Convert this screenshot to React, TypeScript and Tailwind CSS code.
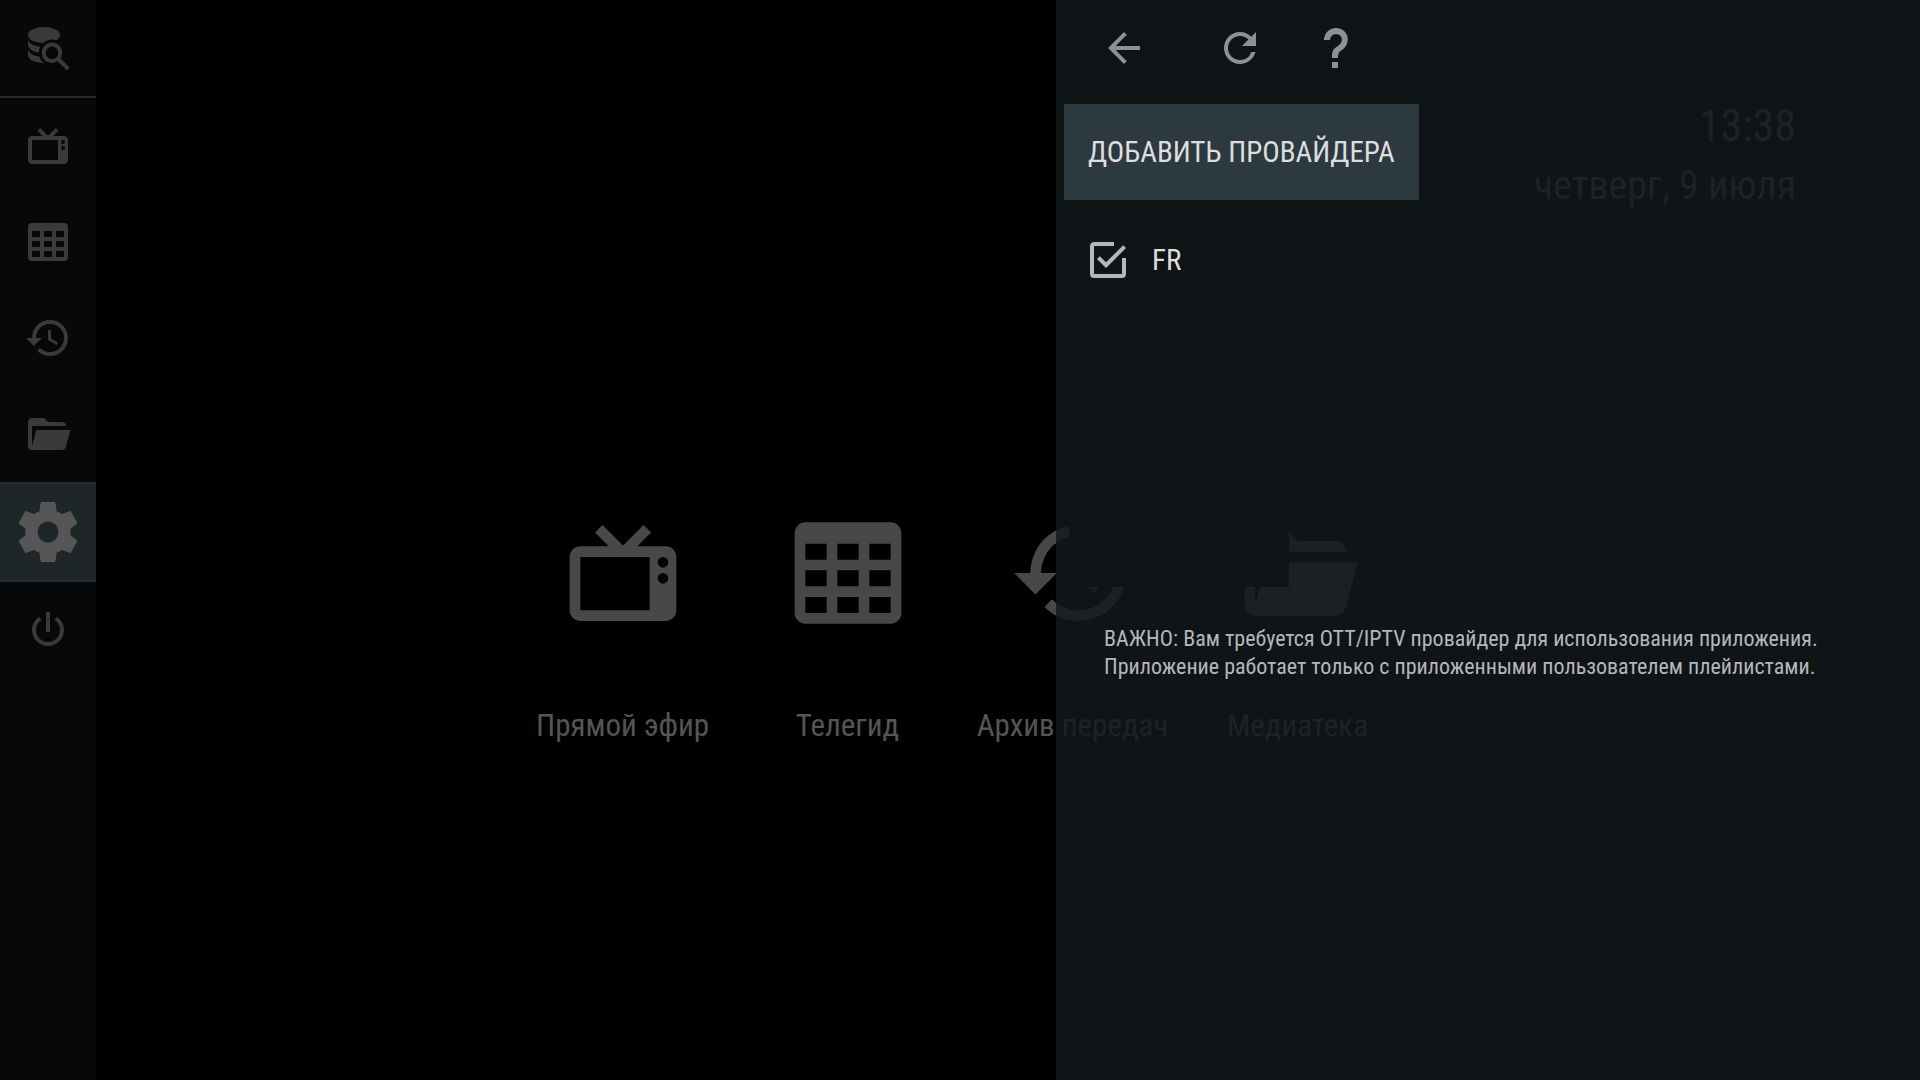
import React, { useState } from 'react';
import { MdArrowBack, MdRefresh } from 'react-icons/md';

type IconProps = { className?: string };

const TvIcon = ({ className }: IconProps) => (
  <svg viewBox="0 0 24 24" fill="currentColor" className={className} aria-hidden="true">
    <path d="M8.16,3L6.75,4.41L9.34,7H4C2.89,7 2,7.89 2,9V19C2,20.11 2.89,21 4,21H20C21.11,21 22,20.11 22,19V9C22,7.89 21.11,7 20,7H14.68L17.27,4.41L15.86,3L12,6.86L8.16,3M4,9H17V19H4V9M19.5,9A1,1 0 0,1 20.5,10A1,1 0 0,1 19.5,11A1,1 0 0,1 18.5,10A1,1 0 0,1 19.5,9M19.5,12A1,1 0 0,1 20.5,13A1,1 0 0,1 19.5,14A1,1 0 0,1 18.5,13A1,1 0 0,1 19.5,12Z" />
  </svg>
);

const GuideIcon = ({ className }: IconProps) => (
  <svg viewBox="0 0.5 24 24" fill="currentColor" className={className} aria-hidden="true">
    <path d="M4,3H20A2,2 0 0,1 22,5V20A2,2 0 0,1 20,22H4A2,2 0 0,1 2,20V5A2,2 0 0,1 4,3M4,7V10H8V7H4M10,7V10H14V7H10M20,10V7H16V10H20M4,12V15H8V12H4M4,20H8V17H4V20M10,12V15H14V12H10M10,20H14V17H10V20M20,20V17H16V20H20M20,12H16V15H20V12Z" />
  </svg>
);

const HistoryIcon = ({ className }: IconProps) => (
  <svg viewBox="0 0 24 24" fill="currentColor" className={className} aria-hidden="true">
    <path d="M13.5,8H12V13L16.28,15.54L17,14.33L13.5,12.25V8M13,3A9,9 0 0,0 4,12H1L4.96,16.03L9,12H6A7,7 0 0,1 13,5A7,7 0 0,1 20,12A7,7 0 0,1 13,19C11.07,19 9.32,18.21 8.06,16.94L6.64,18.36C8.27,20 10.5,21 13,21A9,9 0 0,0 22,12A9,9 0 0,0 13,3" />
  </svg>
);

const FolderIcon = ({ className }: IconProps) => (
  <svg viewBox="0 0 24 24" fill="currentColor" className={className} aria-hidden="true">
    <path d="M19,20H4C2.89,20 2,19.1 2,18V6C2,4.89 2.89,4 4,4H10L12,6H19A2,2 0 0,1 21,8H21L4,8V18L6.14,10H23.21L20.93,18.5C20.7,19.37 19.92,20 19,20Z" />
  </svg>
);

const CogIcon = ({ className }: IconProps) => (
  <svg viewBox="0 0 24 24" fill="currentColor" className={className} aria-hidden="true">
    <path d="M12,15.5A3.5,3.5 0 0,1 8.5,12A3.5,3.5 0 0,1 12,8.5A3.5,3.5 0 0,1 15.5,12A3.5,3.5 0 0,1 12,15.5M19.43,12.97C19.47,12.65 19.5,12.33 19.5,12C19.5,11.67 19.47,11.34 19.43,11L21.54,9.37C21.73,9.22 21.78,8.95 21.66,8.73L19.66,5.27C19.54,5.05 19.27,4.96 19.05,5.05L16.56,6.05C16.04,5.66 15.5,5.32 14.87,5.07L14.5,2.42C14.46,2.18 14.25,2 14,2H10C9.75,2 9.54,2.18 9.5,2.42L9.13,5.07C8.5,5.32 7.96,5.66 7.44,6.05L4.95,5.05C4.73,4.96 4.46,5.05 4.34,5.27L2.34,8.73C2.21,8.95 2.27,9.22 2.46,9.37L4.57,11C4.53,11.34 4.5,11.67 4.5,12C4.5,12.33 4.53,12.65 4.57,12.97L2.46,14.63C2.27,14.78 2.21,15.05 2.34,15.27L4.34,18.73C4.46,18.95 4.73,19.03 4.95,18.95L7.44,17.94C7.96,18.34 8.5,18.68 9.13,18.93L9.5,21.58C9.54,21.82 9.75,22 10,22H14C14.25,22 14.46,21.82 14.5,21.58L14.87,18.93C15.5,18.67 16.04,18.34 16.56,17.94L19.05,18.95C19.27,19.03 19.54,18.95 19.66,18.73L21.66,15.27C21.78,15.05 21.73,14.78 21.54,14.63L19.43,12.97Z" />
  </svg>
);

const PowerIcon = ({ className }: IconProps) => (
  <svg viewBox="0 0 24 24" fill="currentColor" className={className} aria-hidden="true">
    <path d="M16.56,5.44L15.11,6.89C16.84,7.94 18,9.83 18,12A6,6 0 0,1 12,18A6,6 0 0,1 6,12C6,9.83 7.16,7.94 8.88,6.88L7.44,5.44C5.36,6.88 4,9.28 4,12A8,8 0 0,0 12,20A8,8 0 0,0 20,12C20,9.28 18.64,6.88 16.56,5.44M13,3H11V13H13" />
  </svg>
);

const DatabaseSearchIcon = ({ className }: IconProps) => (
  <svg viewBox="0 0 48 48" fill="currentColor" className={className} aria-hidden="true">
    <mask id="lens">
      <path fill="white" d="M0 0h48v48H0z" />
      <circle cx="28" cy="28.7" r="13.2" fill="black" />
    </mask>
    <g mask="url(#lens)">
      <ellipse cx="20" cy="11" rx="16" ry="8" />
      <path d="M4 15c0 4.4 7.2 8 16 8v6c-8.8 0-16-3.6-16-8z" />
      <path d="M4 25c0 4.4 7.2 8 16 8v6c-8.8 0-16-3.6-16-8z" />
    </g>
    <circle cx="28" cy="28.7" r="8.3" fill="none" stroke="currentColor" strokeWidth="4" />
    <path d="M33.8 34.5l10.3 10.3" stroke="currentColor" strokeWidth="4" />
  </svg>
);

const HelpIcon = ({ className }: IconProps) => (
  <svg viewBox="0 0 24 24" fill="currentColor" className={className} aria-hidden="true">
    <path d="M10,19H13V22H10V19M12,2C17.35,2.22 19.68,7.62 16.5,11.67C15.67,12.67 14.33,13.33 13.67,14.17C13,15 13,16 13,17H10C10,15.33 10,13.92 10.67,12.92C11.33,11.92 12.67,11.33 13.5,10.67C15.92,8.43 15.32,5.26 12,5A3,3 0 0,0 9,8H6A6,6 0 0,1 12,2Z" />
  </svg>
);

const CheckIcon = ({ className, checked }: IconProps & { checked: boolean }) => (
  <svg viewBox="0 0 24 24" fill="currentColor" className={className} aria-hidden="true">
    {checked ? (
      <path d="M19,19H5V5H15V3H5C3.89,3 3,3.89 3,5V19A2,2 0 0,0 5,21H19A2,2 0 0,0 21,19V11H19M7.91,10.08L6.5,11.5L11,16L21,6L19.59,4.58L11,13.17L7.91,10.08Z" />
    ) : (
      <path d="M19,3H5C3.89,3 3,3.89 3,5V19A2,2 0 0,0 5,21H19A2,2 0 0,0 21,19V5C21,3.89 20.1,3 19,3M19,5V19H5V5H19Z" />
    )}
  </svg>
);

const navItems = [
  { label: 'Прямой эфир', Icon: TvIcon },
  { label: 'Телегид', Icon: GuideIcon },
  { label: 'Архив передач', Icon: HistoryIcon },
  { label: 'Медиатека', Icon: FolderIcon },
];

const navButton = 'flex h-24 w-full items-center justify-center';

const Sidebar = () => (
  <nav className="z-10 col-start-1 row-start-1 w-24 justify-self-start bg-[#060809] text-[#393b39]">
    <button type="button" aria-label="Поиск" className={navButton}>
      <DatabaseSearchIcon className="size-12" />
    </button>
    <hr className="border-t-2 border-[#262828]" />
    {navItems.map(({ label, Icon }) => (
      <button key={label} type="button" aria-label={label} className={navButton}>
        <Icon className="size-12" />
      </button>
    ))}
    <button
      type="button"
      aria-label="Настройки"
      className="flex h-[100px] w-full items-center justify-center border-y-2 border-[#2a2b2b] bg-[#1e2629] text-[#555655]"
    >
      <CogIcon className="size-[72px]" />
    </button>
    <button type="button" aria-label="Выход" className={navButton}>
      <PowerIcon className="size-12" />
    </button>
  </nav>
);

const Home = () => (
  <main className="isolate z-0 col-start-1 row-start-1 bg-black">
    {/* Clock */}
    <div className="flex flex-col items-end pt-24 pr-[124px] leading-[60px] text-[#525252]">
      <time className="text-[44px]">13:38</time>
      <p className="text-[40px]">четверг, 9 июля</p>
    </div>

    {/* Shortcuts */}
    <div className="relative mt-[293px] flex justify-center gap-px">
      {navItems.map(({ label, Icon }) => (
        <a key={label} href="#" className="flex w-56 flex-col items-center gap-16 text-[#484848]">
          <Icon className="size-32" />
          <span className="text-[31px] leading-[50px] whitespace-nowrap text-[#555555]">{label}</span>
        </a>
      ))}
      {/* Preview area */}
      <div className="absolute -top-3 left-1/2 ml-[109px] h-[90px] w-[220px] bg-black" />
    </div>
  </main>
);

const ProviderPanel = () => {
  const [enabled, setEnabled] = useState(true);

  return (
    <section className="z-10 col-start-1 row-start-1 w-[45%] justify-self-end bg-[#12181b]/83 text-[#dedede]">
      {/* Toolbar */}
      <div className="flex pl-5 text-[#8f9091]">
        <button type="button" aria-label="Назад" className="mr-5 flex size-24 items-center justify-center">
          <MdArrowBack className="size-12" />
        </button>
        <button type="button" aria-label="Обновить" className="flex size-24 items-center justify-center">
          <MdRefresh className="size-12" />
        </button>
        <button type="button" aria-label="Помощь" className="flex size-24 items-center justify-center">
          <HelpIcon className="size-12" />
        </button>
      </div>

      {/* Providers */}
      <div className="flex flex-col items-start gap-3 pt-2 pl-2 text-[29px]">
        <button type="button" className="h-24 bg-[#2c3a40] px-6 pt-0.5">
          ДОБАВИТЬ ПРОВАЙДЕРА
        </button>
        <label className="relative flex h-24 items-center gap-5 px-5">
          <input
            type="checkbox"
            checked={enabled}
            onChange={(e) => setEnabled(e.target.checked)}
            className="sr-only"
          />
          <CheckIcon checked={enabled} className="size-12 text-[#b5b7b8]" />
          <span className="pt-0.5">FR</span>
        </label>
      </div>

      <p className="mt-[317px] px-12 text-[22px] leading-7 text-[#b5b7b8]">
        ВАЖНО: Вам требуется OTT/IPTV провайдер для использования приложения. Приложение работает только с
        приложенными пользователем плейлистами.
      </p>
    </section>
  );
};

const App = () => (
  <div className="grid min-h-screen grid-cols-1 bg-black font-['Roboto_Condensed',Roboto,sans-serif]">
    <Home />
    <Sidebar />
    <ProviderPanel />
  </div>
);

export default App;
